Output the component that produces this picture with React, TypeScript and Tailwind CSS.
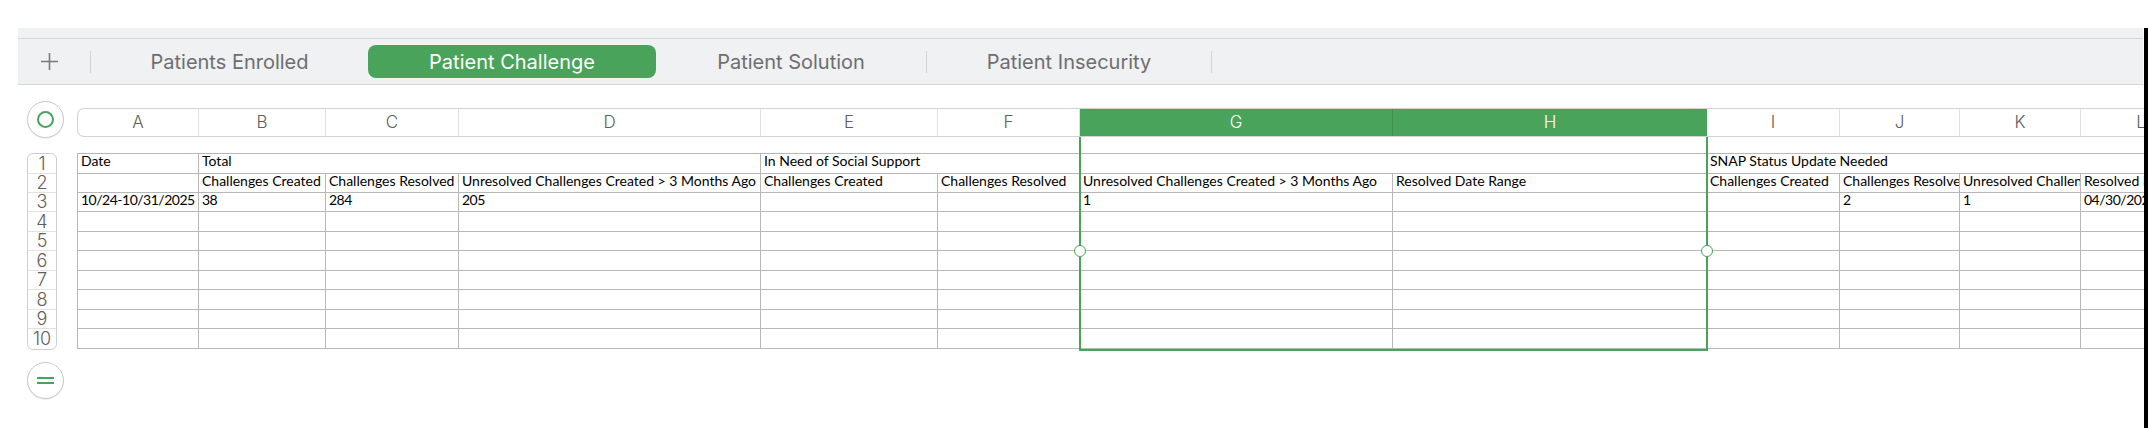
import React from "react";

const colLetters = ["A", "B", "C", "D", "E", "F", "G", "H", "I", "J", "K", "L"];

type Cell = { text?: string; span?: number };

const rows: Cell[][] = [
  [{ text: "Date" }, { text: "Total", span: 3 }, { text: "In Need of Social Support", span: 4 }, { text: "SNAP Status Update Needed", span: 4 }],
  [
    {},
    { text: "Challenges Created" },
    { text: "Challenges Resolved" },
    { text: "Unresolved Challenges Created > 3 Months Ago" },
    { text: "Challenges Created" },
    { text: "Challenges Resolved" },
    { text: "Unresolved Challenges Created > 3 Months Ago" },
    { text: "Resolved Date Range" },
    { text: "Challenges Created" },
    { text: "Challenges Resolved" },
    { text: "Unresolved Challenges Created > 3 Months Ago" },
    { text: "Resolved Date Range" },
  ],
  [
    { text: "10/24-10/31/2025" },
    { text: "38" },
    { text: "284" },
    { text: "205" },
    {},
    {},
    { text: "1" },
    {},
    {},
    { text: "2" },
    { text: "1" },
    { text: "04/30/2025-10/31/2025" },
  ],
];

const emptyRow: Cell[] = Array.from({ length: 12 }, () => ({}));
const allRows: Cell[][] = [...rows, ...Array.from({ length: 7 }, () => emptyRow)];

const spanClass = (s?: number) =>
  s === 3 ? "col-span-3" : s === 4 ? "col-span-4" : "col-span-1";

const isNumeric = (t?: string) => !!t && /^[0-9\/\-]+$/.test(t);

function Tabs() {
  return (
    <div className="ml-[18px] mr-[1px] bg-[#f0f1f3]">
      <div className="h-[10px]" />
      <div className="flex h-[47px] items-center border-y border-[#d6d6d8] font-['Inter',sans-serif]">
        <div className="flex w-[72px] items-center pl-[22px]">
          <svg width="19" height="19" viewBox="0 0 19 19">
            <path d="M9.5 1v17M1 9.5h17" stroke="#7a7a7a" strokeWidth="1.6" />
          </svg>
        </div>
        <div className="h-[22px] w-px bg-[#d4d4d6]" />
        <div className="flex w-[277px] justify-center text-[20px] text-[#6e6e70]">Patients Enrolled</div>
        <div className="flex h-[33px] w-[288px] items-center justify-center rounded-[8px] bg-[#4aa35a] text-[20px] text-white">
          Patient Challenge
        </div>
        <div className="flex w-[270px] justify-center text-[20px] text-[#6e6e70]">Patient Solution</div>
        <div className="h-[22px] w-px bg-[#d4d4d6]" />
        <div className="flex w-[284px] justify-center text-[20px] text-[#6e6e70]">Patient Insecurity</div>
        <div className="h-[22px] w-px bg-[#d4d4d6]" />
      </div>
    </div>
  );
}

function LeftControls() {
  return (
    <div className="flex w-[77px] shrink-0 flex-col pl-[27px] pt-[16px]">
      <div className="flex h-[37px] w-[37px] items-center justify-center rounded-full border border-[#c9c9c9] bg-white shadow-[0_1px_1px_rgba(0,0,0,0.08)]">
        <div className="h-[17px] w-[17px] rounded-full border-2 border-[#4aa35a]" />
      </div>
      <div className="mt-[15px] flex w-[30px] flex-col overflow-hidden rounded-[6px] border border-[#cfcfcf] bg-white font-['Inter',sans-serif] text-[#5e5e5e]">
        {[20, 19, 19, 20, 19, 20, 19, 20, 19, 20].map((h, i) => (
          <div
            key={i}
            style={{ height: h }}
            className={`flex items-center justify-center text-[18px] font-light leading-none ${i < 9 ? "border-b border-[#e2e2e2]" : ""}`}
          >
            {i + 1}
          </div>
        ))}
      </div>
      <div className="mt-[12px] flex h-[37px] w-[37px] flex-col items-center justify-center gap-[3px] rounded-full border border-[#c9c9c9] bg-white shadow-[0_1px_1px_rgba(0,0,0,0.08)]">
        <div className="h-[2px] w-[17px] bg-[#4aa35a]" />
        <div className="h-[2px] w-[17px] bg-[#4aa35a]" />
      </div>
    </div>
  );
}

function Sheet() {
  return (
    <div className="relative flex-1 overflow-hidden pt-[23px]">
      {/* column header */}
      <div className="grid h-[29px] w-max grid-cols-[121px_127px_133px_302px_177px_142px_313px_314px_133px_120px_121px_121px] overflow-hidden rounded-l-[7px] border-y border-l border-[#d2d2d2] bg-white font-['Inter',sans-serif]">
        {colLetters.map((l, i) => {
          const sel = i === 6 || i === 7;
          return (
            <div
              key={l}
              className={`flex items-center justify-center text-[17px] font-light ${
                sel ? "bg-[#4aa35a] text-white" : "text-[#5e5e5e]"
              } ${i === 6 ? "border-r border-[#3f9150]" : i === 7 ? "" : "border-r border-[#e0e0e0]"}`}
            >
              {l}
            </div>
          );
        })}
      </div>
      {/* table */}
      <div className="mt-[16px] grid w-max grid-cols-[121px_127px_133px_302px_177px_142px_313px_314px_133px_120px_121px_121px] grid-rows-[20px_19px_19px_20px_19px_20px_19px_20px_19px_20px] border-l border-t border-[#b8b8b8] font-['Lato',sans-serif] text-[14px] text-black">
        {allRows.map((r, ri) =>
          r.map((c, ci) => (
            <div
              key={`${ri}-${ci}`}
              className={`${spanClass(c.span)} overflow-hidden whitespace-nowrap border-b border-r border-[#b8b8b8] pl-[3px] leading-[14px] ${
                isNumeric(c.text) ? "tracking-[-0.5px]" : ""
              }`}
            >
              {c.text ?? ""}
            </div>
          ))
        )}
      </div>
      {/* selection frame */}
      <div className="absolute left-[1002px] top-[52px] h-[214px] w-[629px] border-x-2 border-b-2 border-[#4aa35a]">
        <div className="absolute left-[-7px] top-[108px] h-[12px] w-[12px] rounded-full border-[1.5px] border-[#4aa35a] bg-white" />
        <div className="absolute right-[-7px] top-[108px] h-[12px] w-[12px] rounded-full border-[1.5px] border-[#4aa35a] bg-white" />
      </div>
    </div>
  );
}

export default function App() {
  return (
    <div className="h-[428px] w-[2148px] overflow-hidden bg-white">
      <div className="h-[28px]" />
      <div className="flex h-[400px]">
        <div className="flex min-w-0 flex-1 flex-col">
          <Tabs />
          <div className="flex min-w-0 flex-1">
            <LeftControls />
            <Sheet />
          </div>
        </div>
        <div className="w-[4px] bg-black" />
      </div>
    </div>
  );
}
